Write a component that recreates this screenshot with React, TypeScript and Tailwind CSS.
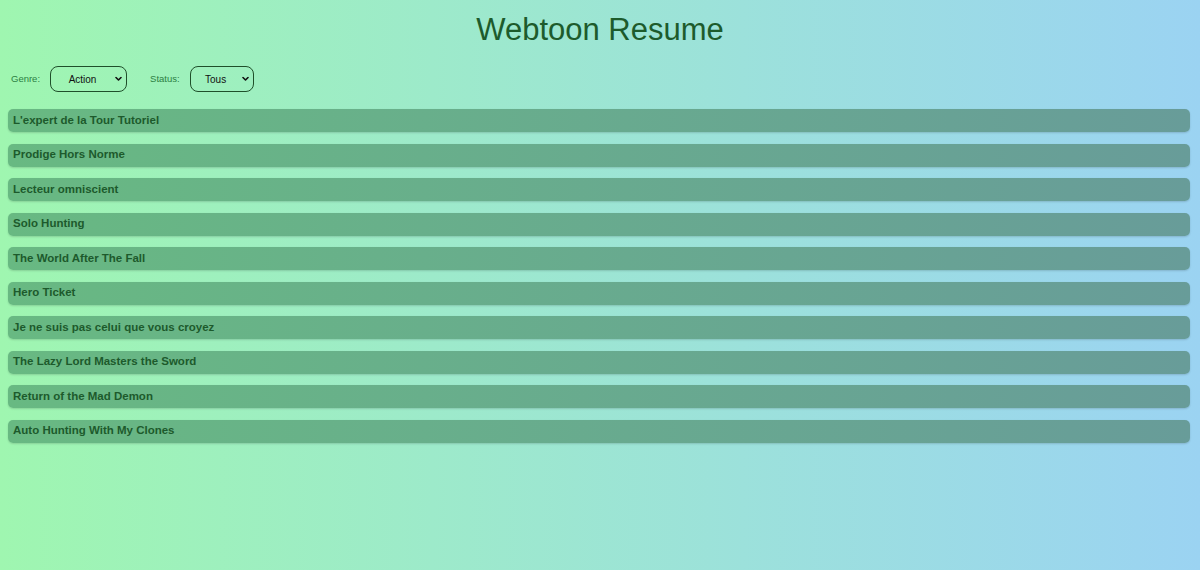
import { useState } from 'react'

const webtoons = [
  "L'expert de la Tour Tutoriel",
  'Prodige Hors Norme',
  'Lecteur omniscient',
  'Solo Hunting',
  'The World After The Fall',
  'Hero Ticket',
  'Je ne suis pas celui que vous croyez',
  'The Lazy Lord Masters the Sword',
  'Return of the Mad Demon',
  'Auto Hunting With My Clones',
]

function Chevron() {
  return (
    <svg
      className="pointer-events-none absolute right-[5px] top-1/2 -translate-y-1/2"
      width="7"
      height="5"
      viewBox="0 0 7 5"
      fill="none"
    >
      <path d="M1 1l2.5 2.5L6 1" stroke="#111" strokeWidth="1.6" strokeLinecap="round" strokeLinejoin="round" />
    </svg>
  )
}

function Filter({ label, value, options, width, onChange }: {
  label: string
  value: string
  options: string[]
  width: string
  onChange: (v: string) => void
}) {
  return (
    <div className="flex items-center gap-[10px]">
      <span className="text-[9.5px] text-[#2c7f43]">{label}</span>
      <div className={`relative ${width}`}>
        <select
          value={value}
          onChange={(e) => onChange(e.target.value)}
          className="block h-[26px] w-full appearance-none rounded-[8px] border border-[#1f4f2a] bg-transparent pr-[12px] text-center text-[10px] text-[#111] outline-none"
        >
          {options.map((o) => (
            <option key={o} value={o}>{o}</option>
          ))}
        </select>
        <Chevron />
      </div>
    </div>
  )
}

export default function App() {
  const [genre, setGenre] = useState('Action')
  const [status, setStatus] = useState('Tous')

  return (
    <div className="min-h-[570px] bg-gradient-to-r from-[#9ff6b0] to-[#9bd3f2] font-['Liberation_Sans',Arial,sans-serif]">
      <h1 className="pt-[11px] text-center text-[31px] leading-[37px] text-[#1d5b2c]">
        Webtoon Resume
      </h1>

      <div className="mt-[18px] flex items-center gap-[23px] pl-[11px]">
        <Filter
          label="Genre:"
          value={genre}
          options={['Action', 'Fantasy', 'Romance', 'Comédie']}
          width="w-[77px]"
          onChange={setGenre}
        />
        <Filter
          label="Status:"
          value={status}
          options={['Tous', 'En cours', 'Terminé']}
          width="w-[64px]"
          onChange={setStatus}
        />
      </div>

      <ul className="mt-[17px] flex flex-col gap-[11.5px] pl-[8px] pr-[10px]">
        {webtoons.map((title) => (
          <li
            key={title}
            className="flex h-[23px] items-center rounded-[5px] bg-gradient-to-r from-[#68b982] to-[#689c99] px-[5px] text-[11.5px] font-bold text-[#1d5a2c] shadow-[0_1px_2px_rgba(0,0,0,0.15)]"
          >
            {title}
          </li>
        ))}
      </ul>
    </div>
  )
}
